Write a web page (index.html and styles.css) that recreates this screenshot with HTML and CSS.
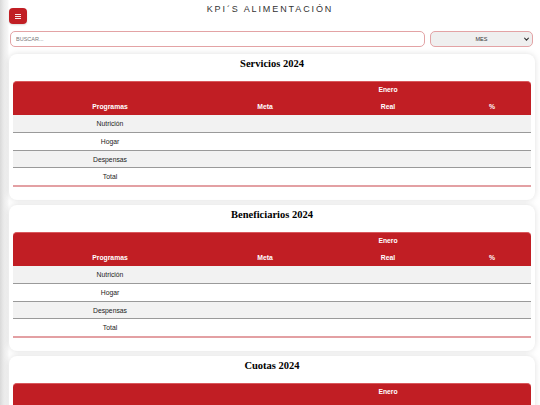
FILE: index.html
```html
<!DOCTYPE html>
<html lang="es">
<head>
<meta charset="utf-8">
<title>KPI´S ALIMENTACIÓN</title>
<link rel="stylesheet" href="styles.css">
</head>
<body>
<header class="topbar">
  <div class="left">
    <button class="menu-btn" type="button" aria-label="Menú">
      <svg width="6" height="5" viewBox="0 0 6 5"><path d="M0 0.5H6M0 2.5H6M0 4.5H6" stroke="#fff" stroke-width="0.9"/></svg>
    </button>
  </div>
  <h1 class="page-title">KPI´S ALIMENTACIÓN</h1>
  <div></div>
</header>
<div class="filters">
  <input class="search" type="text" placeholder="BUSCAR...">
  <div class="month-wrap">
    <select class="month"><option>MES</option></select>
    <svg class="chev" width="5" height="4" viewBox="0 0 5 4"><path d="M0.3 0.8L2.5 3.2L4.7 0.8" fill="none" stroke="#333" stroke-width="1.1"/></svg>
  </div>
</div>
<main class="cards">
  <section class="card">
    <h2 class="card-title">Servicios 2024</h2>
    <table class="kpi">
      <colgroup><col class="c1"><col class="c2"><col class="c3"><col class="c4"></colgroup>
      <thead>
        <tr><th></th><th></th><th>Enero</th><th></th></tr>
        <tr><th>Programas</th><th>Meta</th><th>Real</th><th>%</th></tr>
      </thead>
      <tbody>
        <tr><td>Nutrición</td><td></td><td></td><td></td></tr>
        <tr><td>Hogar</td><td></td><td></td><td></td></tr>
        <tr><td>Despensas</td><td></td><td></td><td></td></tr>
        <tr><td>Total</td><td></td><td></td><td></td></tr>
      </tbody>
    </table>
  </section>
  <section class="card">
    <h2 class="card-title">Beneficiarios 2024</h2>
    <table class="kpi">
      <colgroup><col class="c1"><col class="c2"><col class="c3"><col class="c4"></colgroup>
      <thead>
        <tr><th></th><th></th><th>Enero</th><th></th></tr>
        <tr><th>Programas</th><th>Meta</th><th>Real</th><th>%</th></tr>
      </thead>
      <tbody>
        <tr><td>Nutrición</td><td></td><td></td><td></td></tr>
        <tr><td>Hogar</td><td></td><td></td><td></td></tr>
        <tr><td>Despensas</td><td></td><td></td><td></td></tr>
        <tr><td>Total</td><td></td><td></td><td></td></tr>
      </tbody>
    </table>
  </section>
  <section class="card">
    <h2 class="card-title">Cuotas 2024</h2>
    <table class="kpi">
      <colgroup><col class="c1"><col class="c2"><col class="c3"><col class="c4"></colgroup>
      <thead>
        <tr><th></th><th></th><th>Enero</th><th></th></tr>
        <tr><th>Programas</th><th>Meta</th><th>Real</th><th>%</th></tr>
      </thead>
      <tbody>
        <tr><td>Nutrición</td><td></td><td></td><td></td></tr>
        <tr><td>Hogar</td><td></td><td></td><td></td></tr>
        <tr><td>Despensas</td><td></td><td></td><td></td></tr>
        <tr><td>Total</td><td></td><td></td><td></td></tr>
      </tbody>
    </table>
  </section>
</main>
</body>
</html>
```

FILE: styles.css
```css
* { box-sizing: border-box; }

html, body { margin: 0; padding: 0; }

body {
  font-family: "Liberation Sans", Arial, sans-serif;
  color: #222;
  background:
    linear-gradient(to right, #d9d9d9 0px, #ececec 4px, #f7f7f7 8px, rgba(255,255,255,0) 9px) left top / 9px 100% no-repeat,
    #ffffff;
  min-height: 405px;
}

.topbar {
  display: grid;
  grid-template-columns: 1fr auto 1fr;
  align-items: start;
  height: 31px;
}

.left { padding: 8px 0 0 9px; }

.menu-btn {
  width: 18px;
  height: 16px;
  border: none;
  border-radius: 4px;
  background: #c11e24;
  padding: 0;
  display: flex;
  align-items: center;
  justify-content: center;
  box-shadow: 0 1px 2px rgba(0,0,0,0.15);
}

.menu-btn svg { display: block; }

.page-title {
  margin: 4px 0 0 0;
  font-size: 9px;
  font-weight: normal;
  letter-spacing: 1.9px;
  line-height: 11px;
  color: #333;
  text-align: center;
}

.filters {
  display: flex;
  align-items: flex-start;
  gap: 5px;
  padding: 0 7px 0 10px;
  height: 16px;
}

.search {
  display: block;
  flex: 1;
  height: 16px;
  border: 1px solid #e3a3a5;
  border-radius: 5px;
  padding: 0 5px;
  font-family: "Liberation Sans", Arial, sans-serif;
  font-size: 5.5px;
  color: #333;
  background: #fff;
  outline: none;
}

.search::placeholder { color: #777; }

.month-wrap {
  position: relative;
  width: 103px;
  height: 16px;
}

.month {
  display: block;
  -webkit-appearance: none;
  appearance: none;
  width: 100%;
  height: 16px;
  margin: 0;
  border: 1px solid #e3a3a5;
  border-radius: 5px;
  background: #efefef;
  font-family: "Liberation Sans", Arial, sans-serif;
  font-size: 5.5px;
  color: #333;
  text-align: center;
  text-align-last: center;
  padding: 0 2px;
}

.chev {
  position: absolute;
  right: 4px;
  top: 6px;
  pointer-events: none;
}

.cards {
  display: flex;
  flex-direction: column;
  gap: 5px;
  margin: 7px 5px 0 9px;
}

.card {
  background: #fff;
  border-radius: 8px;
  box-shadow: 0 0 6px rgba(0,0,0,0.13);
  padding: 3px 4px 13px;
}

.card-title {
  margin: 0 0 11px;
  font-family: "Liberation Serif", "Times New Roman", serif;
  font-size: 10.5px;
  line-height: 13px;
  font-weight: bold;
  text-align: center;
  color: #000;
}

.kpi {
  width: 100%;
  border-collapse: separate;
  border-spacing: 0;
  table-layout: fixed;
  font-size: 6.8px;
}

.kpi .c1 { width: 37.45%; }
.kpi .c2 { width: 22.4%; }
.kpi .c3 { width: 25.1%; }
.kpi .c4 { width: 15.05%; }

.kpi thead th {
  background: #c11e24;
  color: #fff;
  font-weight: bold;
  height: 17px;
  padding: 0;
  text-align: center;
  vertical-align: middle;
  line-height: 17px;
}

.kpi thead tr:first-child th { border-top: 1px solid #d9585c; line-height: 16px; }
.kpi thead tr:first-child th:first-child { border-top-left-radius: 4px; }
.kpi thead tr:first-child th:last-child { border-top-right-radius: 4px; }

.kpi tbody td {
  padding: 1px 0 0;
  height: 17.75px;
  line-height: 15.75px;
  text-align: center;
  vertical-align: middle;
  border-bottom: 1px solid #9a9a9a;
  color: #222;
}

.kpi tbody tr:nth-child(odd) td { background: #f2f2f2; }
.kpi tbody tr:last-child td { border-bottom: 2px solid #e3a0a3; }
```
